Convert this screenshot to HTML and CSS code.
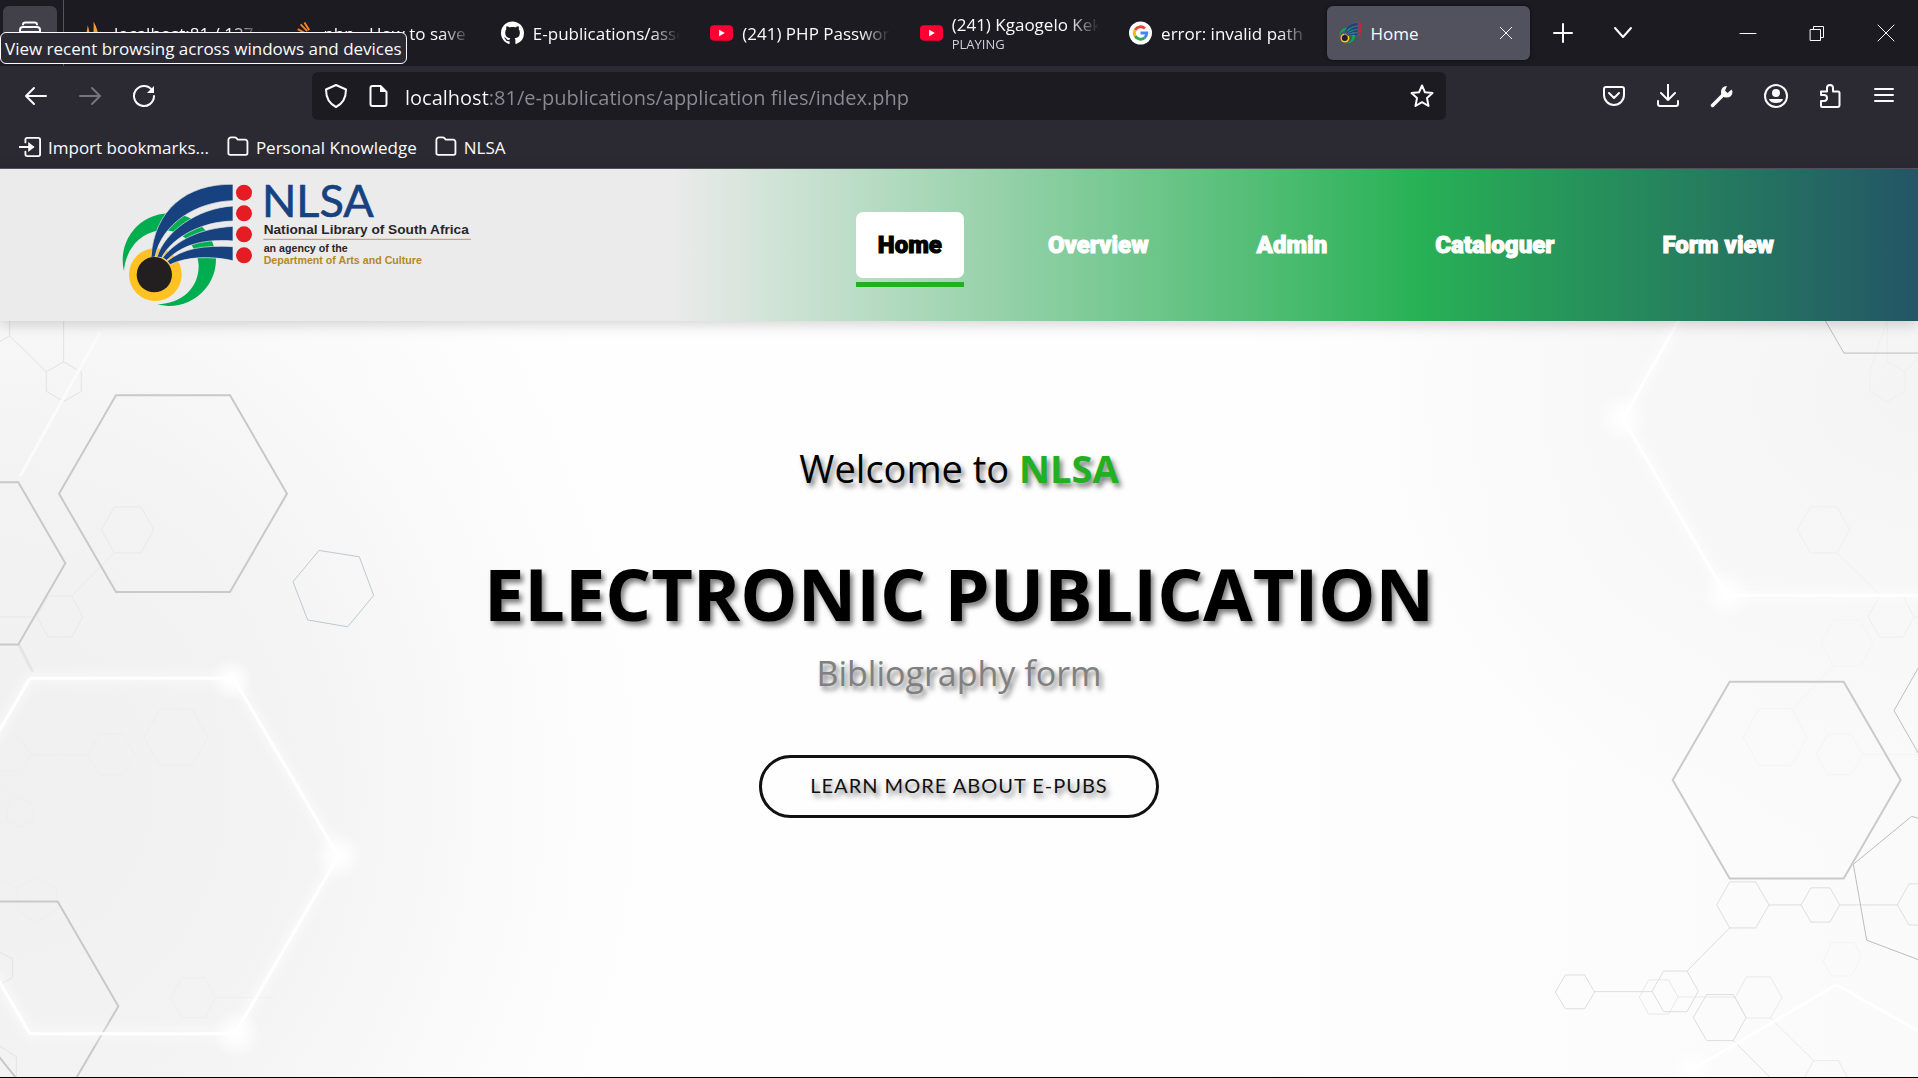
FILE: index.html
```html
<!DOCTYPE html>
<html lang="en">
<head>
<meta charset="utf-8">
<title>Home</title>
<link rel="stylesheet" href="styles.css">
</head>
<body>
<svg class="defs" width="0" height="0" aria-hidden="true">
  <symbol id="mark" viewBox="60 60 410 390">
    <path fill="#00ae50" d="M72 333A140 140 0 1 1 348 298A140 140 0 0 1 172 433C250 430 297 380 296 315C290 250 240 205 180 211C110 220 75 280 72 333Z"/>
    <circle cx="166" cy="344" r="79" fill="#ffc222"/>
    <g fill="#17427f" stroke="#ebebeb" stroke-width="2">
      <path d="M399 73C260 70 162 150 153 293L165 291C185 190 290 125 399 122Z"/>
      <path d="M399 138C290 145 195 215 171 291L185 293C215 235 300 185 399 183Z"/>
      <path d="M399 199C300 205 230 240 188 293L200 301C250 250 320 237 399 243Z"/>
      <path d="M399 260C310 255 250 265 202 303L210 314C260 290 330 287 399 302Z"/>
    </g>
    <circle cx="163" cy="344" r="53" fill="#231f20"/>
    <g fill="#e61c24"><circle cx="432" cy="98" r="24"/><circle cx="432" cy="160" r="24"/><circle cx="432" cy="223" r="24"/><circle cx="432" cy="286" r="24"/></g>
  </symbol>
  <symbol id="youtube" viewBox="0 0 24 24"><rect y="4" width="24" height="16" rx="4" fill="#ff0033"/><path d="M9.500 8.500v7l6-3.500z" fill="#fff"/></symbol>
  <symbol id="folder" viewBox="0 0 24 24"><path d="M1.500 18.500v-14a3 3 0 0 1 3-3h4a2 2 0 0 1 1.500.6l1.800 1.900h8a2.500 2.500 0 0 1 2.500 2.500v12a2 2 0 0 1-2 2h-16.800a2 2 0 0 1-2-2z"/></symbol>
</svg>

<div class="browser">
  <div class="tabbar">
    <button class="recent" aria-label="View recent browsing"><svg class="i24" viewBox="0 0 24 24"><path d="M5 3.500q0-2 2.500-2h9q2.500 0 2.500 2M2 9q0-3 3-3h14q3 0 3 3v10q0 3-3 3h-14q-3 0-3-3zM2 11h20"/></svg></button>
    <div class="tabs">
      <a class="tab" href="#"><svg class="fav" viewBox="0 0 24 24"><path d="M10 22Q13 10 12 0Q17 8 18 22zM1 22Q5 14 6 4Q8 10 9 22zM19 20q1-6 0-10q3 5 4 10z" fill="#f89c2c"/></svg><span class="label">localhost:81 / 127.0.0.1</span></a>
      <a class="tab" href="#"><svg class="fav" viewBox="0 0 24 24"><path d="M14 1l5 8M10 3l7 7M7 8l9 5M6 13l10 2M6 18h10" stroke="#f48024" stroke-width="2" fill="none"/><path d="M3 14v8h16v-8" stroke="#bcbbbb" stroke-width="2" fill="none"/></svg><span class="label">php - How to save a file</span></a>
      <a class="tab" href="#"><svg class="fav" viewBox="0 0 16 16"><path fill="#fff" d="M8 0C3.580 0 0 3.580 0 8c0 3.540 2.290 6.530 5.470 7.590.4.070.55-.17.55-.38 0-.19-.01-.82-.01-1.490-2.010.37-2.530-.49-2.690-.94-.09-.23-.48-.94-.82-1.130-.28-.15-.68-.52-.01-.53.63-.01 1.080.58 1.230.82.72 1.210 1.870.87 2.330.66.070-.52.28-.87.510-1.070-1.780-.2-3.640-.89-3.640-3.950 0-.87.31-1.590.82-2.150-.08-.2-.36-1.020.08-2.120 0 0 .67-.21 2.200.82.64-.18 1.320-.27 2-.27s1.360.09 2 .27c1.530-1.040 2.200-.82 2.200-.82.44 1.100.16 1.920.08 2.120.51.56.82 1.270.82 2.150 0 3.070-1.870 3.750-3.650 3.950.29.25.54.73.54 1.480 0 1.070-.01 1.930-.01 2.200 0 .21.15.46.55.38A8.010 8.010 0 0 0 16 8c0-4.420-3.580-8-8-8z"/></svg><span class="label">E-publications/assets at</span></a>
      <a class="tab" href="#"><svg class="fav"><use href="#youtube"/></svg><span class="label">(241) PHP Password Hash</span></a>
      <a class="tab" href="#"><svg class="fav"><use href="#youtube"/></svg><span class="label two">(241) Kgaogelo Kekana<small>PLAYING</small></span></a>
      <a class="tab" href="#"><svg class="fav" viewBox="0 0 24 24"><circle cx="12" cy="12" r="12" fill="#fff"/><g fill="none" stroke-width="3"><path stroke="#ea4335" d="M6.400 8.800A6.500 6.500 0 0 1 16.600 7.400"/><path stroke="#fbbc05" d="M6.400 15.200A6.500 6.500 0 0 1 6.400 8.800"/><path stroke="#34a853" d="M16.200 17A6.500 6.500 0 0 1 6.400 15.200"/><path stroke="#4285f4" d="M12 12h6.500A6.500 6.500 0 0 1 16.200 17"/></g></svg><span class="label">error: invalid path 'src</span></a>
      <a class="tab active" href="#"><svg class="fav"><use href="#mark"/></svg><span class="label">Home</span><svg class="x" viewBox="0 0 14 14"><path d="M1 1l12 12M13 1L1 13"/></svg></a>
    </div>
    <button class="add" aria-label="New tab"><svg class="i24" viewBox="0 0 24 24"><path d="M12 3v18M3 12h18"/></svg></button>
    <button class="add" aria-label="List all tabs"><svg class="i24" viewBox="0 0 24 24"><path d="M4 7l8 9 8-9"/></svg></button>
    <div class="window">
      <button aria-label="Minimize"><svg class="i24 thin" viewBox="0 0 24 24"><path d="M4 12.500h16"/></svg></button>
      <button aria-label="Restore"><svg class="i24 thin" viewBox="0 0 24 24"><path d="M5.500 8.500h10v11h-10zM8.500 8v-2.500h10v11h-2.500"/></svg></button>
      <button aria-label="Close"><svg class="i24 thin" viewBox="0 0 24 24"><path d="M4 4l16 16M20 4L4 20"/></svg></button>
    </div>
    <div class="tooltip" role="tooltip">View recent browsing across windows and devices</div>
  </div>

  <div class="toolbar">
    <button aria-label="Back"><svg class="i24" viewBox="0 0 24 24"><path d="M22 12H2M10 4l-8 8 8 8"/></svg></button>
    <button aria-label="Forward" disabled><svg class="i24" viewBox="0 0 24 24"><path d="M2 12h20M14 4l8 8-8 8"/></svg></button>
    <button aria-label="Reload"><svg class="i24" viewBox="0 0 24 24"><path d="M20 6A10 10 0 1 0 22 12"/><path class="solid" d="M22 2v7h-7z"/></svg></button>
    <label class="url">
      <svg class="i24" viewBox="0 0 24 24"><path d="M12 1l10 4.500c0 9-3 14-10 17.500C5 19.500 2 14.500 2 5.500z"/></svg>
      <svg class="i24" viewBox="0 0 24 24"><path d="M6.500 2h8l6 6v12a2 2 0 0 1-2 2h-12a2 2 0 0 1-2-2v-16a2 2 0 0 1 2-2z"/><path class="solid" d="M14 2v6h6z"/></svg>
      <input type="text" aria-label="Address" value="localhost:81/e-publications/application files/index.php">
      <svg class="i24" viewBox="0 0 24 24"><path d="M12 1.500l3 6.800 7.500.8-5.500 5 1.500 7.900-6.500-3.800-6.500 3.800 1.500-7.900-5.500-5 7.500-.8z"/></svg>
    </label>
    <button aria-label="Pocket"><svg class="i24" viewBox="0 0 24 24"><path d="M4 3h16a2 2 0 0 1 2 2v6a10 10 0 0 1-20 0v-6a2 2 0 0 1 2-2zM7 9l5 5 5-5"/></svg></button>
    <button aria-label="Downloads"><svg class="i24" viewBox="0 0 24 24"><path d="M12 0v16M5 9l7 7 7-7M2 17v3q0 2 2 2h16q2 0 2-2v-3"/></svg></button>
    <button aria-label="Developer tools"><svg class="i24" viewBox="0 0 24 24"><path d="M2.500 21.500L14 10" stroke-width="3.500"/><path class="solid" d="M17 2q-6 0-6 6.500 0 5 5.500 5 6 0 6-6l-1-2-4 3.500-2.500-2.500z"/></svg></button>
    <button aria-label="Account"><svg class="i24" viewBox="0 0 24 24"><circle cx="12" cy="12" r="11"/><circle class="solid" cx="12" cy="9" r="4"/><path class="solid" d="M5 15h14q-1 4-7 4t-7-4z"/></svg></button>
    <button aria-label="Extensions"><svg class="i24" viewBox="0 0 24 24"><path d="M3 7.500h6v-3.500a3 3 0 0 1 6 0v3.500h5a1.500 1.500 0 0 1 1.500 1.500v12a2 2 0 0 1-2 2h-15.500a1 1 0 0 1-1-1v-5h3a3 3 0 0 0 0-6h-3v-2.500a1 1 0 0 1 1-1z"/></svg></button>
    <button aria-label="Menu"><svg class="i24" viewBox="0 0 24 24"><path d="M3 5h18M3 11h18M3 17h18"/></svg></button>
  </div>

  <nav class="bookmarks" aria-label="Bookmarks">
    <a href="#"><svg class="i22" viewBox="0 0 24 24"><path d="M7 7v-3q0-2 2-2h12q2 0 2 2v16q0 2-2 2h-12q-2 0-2-2v-3M0 12h15"/><path class="solid" d="M10 6.500l7 5.500-7 5.500z"/></svg><span>Import bookmarks...</span></a>
    <a href="#"><svg class="i22"><use href="#folder"/></svg><span>Personal Knowledge</span></a>
    <a href="#"><svg class="i22"><use href="#folder"/></svg><span>NLSA</span></a>
  </nav>
</div>

<header class="site">
  <a class="logo" href="#" aria-label="NLSA">
    <svg viewBox="60 27 1080 456">
      <use href="#mark" x="60" y="60" width="410" height="390"/>
      <text class="big" x="486" y="171">NLSA</text>
      <text class="name" x="491" y="221">National Library of South Africa</text>
      <path d="M490 238h623" stroke="#bf9a56" stroke-width="3"/>
      <text class="dept" x="491" y="276">an agency of the</text>
      <text class="dept gold" x="491" y="311">Department of Arts and Culture</text>
    </svg>
  </a>
  <nav class="menu" aria-label="Main">
    <a class="current" href="#">Home</a>
    <a href="#">Overview</a>
    <a href="#">Admin</a>
    <a href="#">Cataloguer</a>
    <a href="#">Form view</a>
  </nav>
</header>

<main class="hero">
  <svg class="pattern" viewBox="0 33 5754 2271" preserveAspectRatio="xMidYMin slice" aria-hidden="true">
    <defs>
      <radialGradient id="glow"><stop offset="0" stop-color="#fff"/><stop offset=".3" stop-color="#fff" stop-opacity=".8"/><stop offset="1" stop-color="#fff" stop-opacity="0"/></radialGradient>
      <filter id="soft" x="-20%" y="-20%" width="140%" height="140%"><feGaussianBlur stdDeviation="12"/></filter>
    </defs>
    <g transform="scale(1 1.469)" fill="none">
      <g class="fine" stroke="#e2e2e2">
        <path d="M29 0v53L-10 68M29 53L139 126M191 0v106M191 106l53 21v39l-53 21-52-21v-40z"/>
        <path d="M-20 1305l58 20v38l-58 22M-20 1495l69 30v60"/>
      </g>
      <path class="beam" d="M60 340L300 45" stroke="#fbfbfb"/>
      <g class="fine" stroke="#e9e9e9">
        <path d="M343 402h80l38 47-38 47h-80l-39-47zM343 496L215 584M145 584h70l33 43-33 41h-70l-35-41zM-10 627h110"/>
      </g>
      <g class="fine" stroke="#eeeeee">
        <path d="M480 815h97l47 58-47 57h-97l-49-57zM298 866h72l35 42-35 41h-72l-35-41zM95 908h168M30 874h30l34 34-34 34h-60M25 1007l35-12 38 16v30l-40 16-37-16zM-10 1158l60 22 60-22 60 24v42l-62 27-60-27v-44M545 1364h70l32 40-32 41h-70l-32-41zM647 1404h175"/>
      </g>
      <path class="beam" d="M56 683l42 56" stroke="#e4e4e4"/>
      <g class="bold" stroke="#c9c9c9">
        <path d="M348 174h342l171 201-171 201h-342l-171-201z"/>
        <path d="M-20 352h75l141 165-141 166h-75M-20 1208h193l182 214-125 145-40 45M-20 1510l70 60"/>
      </g>
      <path class="fine" d="M957 491l121 13 43 79-78 64-120-14-44-78z" stroke="#bccacd"/>
      <path class="halo" d="M90 752h610l315 363-310 363h-615l-130-150M90 752L-20 880"/>
      <path class="beam" d="M90 752h610l315 363-310 363h-615l-130-150M90 752L-20 880" stroke="#fff"/>
      <g fill="url(#glow)"><ellipse cx="695" cy="755" rx="65" ry="44"/><ellipse cx="1015" cy="1115" rx="75" ry="51"/><ellipse cx="710" cy="1478" rx="75" ry="51"/></g>
    </g>
    <g transform="translate(4314 0) scale(1 1.469)" fill="none">
      <g class="fine" stroke="#efefef">
        <path d="M1348 20v86l53 20v40l-53 21-52-21v-40zM1401 126l50-36M1117 402h80l38 47-38 47h-80l-39-47zM1197 496l125 84 M1325 584h70l33 43-33 41h-70l-35-41zM1428 627h30"/>
        <path d="M1187 633h80l38 48-38 46h-80l-39-46zM1187 727L1062 814M962 814h100l45 58-45 58h-100l-46-58zM1170 866h70l35 42-35 41h-70l-35-41zM1275 908h180M1180 1292h70l20 30-30 38h-60l-24-30z" stroke="#f4f4f4"/>
        <path d="M632 1368h60l28 35-28 35h-60l-28-35zM720 1403h172M925 1362h72l35 42-35 42h-72l-33-42zM997 1446l130 87h75l32 42M1127 1533l-32 40" stroke="#e9e9e9"/>
      </g>
      <g class="fine" stroke="#dedede">
        <path d="M875 1168h78l40 47-40 47h-78l-39-47zM993 1215h96M1119 1180h57l29 35-29 35h-57l-30-35zM1205 1215h173M1450 1172h-37l-35 43 35 41h37M875 1262L747 1350M677 1350h70l34 41-34 42h-70l-35-42zM642 1392H470M382 1358h58l30 35-30 34h-58l-30-34zM806 1398h80l38 47-38 47h-80l-40-47zM886 1492l110 75"/>
      </g>
      <path class="bold" d="M875 759h342l171 201-171 201h-342l-171-201z" stroke="#cacaca"/>
      <path class="fine" d="M1150 8l68 80h230M1450 720l-82 98 82 98M1450 1040l-29-6-175 98 40 155 164 42" stroke="#bdbdbd"/>
      <path class="halo" d="M740 0L555 222l310 361h600"/>
      <path class="beam" d="M740 0L555 222l310 361h600M765 1550l430-172 260 100" stroke="#fff"/>
      <g fill="url(#glow)"><ellipse cx="552" cy="220" rx="75" ry="51"/><ellipse cx="865" cy="580" rx="75" ry="51"/><ellipse cx="765" cy="1550" rx="65" ry="44"/></g>
    </g>
  </svg>
  <p class="welcome">Welcome to <strong>NLSA</strong></p>
  <h1>ELECTRONIC PUBLICATION</h1>
  <p class="sub">Bibliography form</p>
  <button class="more">LEARN MORE ABOUT E-PUBS</button>
</main>
</body>
</html>
```
FILE: styles.css
```css
* { box-sizing: border-box; }

body {
  margin: 0;
  min-height: 100vh;
  display: flex;
  flex-direction: column;
  font-family: "Open Sans", "Noto Sans", sans-serif;
  border-bottom: 1px solid #000;
}

a { color: inherit; text-decoration: none; }
button { border: 0; padding: 0; background: none; color: inherit; font: inherit; }
.defs { position: absolute; }

/* Browser window */
.browser { background: #2b2a33; color: #fbfbfe; font-size: 17px; border-bottom: 1px solid #56555e; }
.browser svg { flex: none; }
.i24, .i22 { width: 24px; height: 24px; fill: none; stroke: currentColor; stroke-width: 2; stroke-linejoin: round; stroke-linecap: round; }
.i22 { width: 22px; height: 22px; }
.thin { stroke-width: 1; stroke-linejoin: miter; }
.solid { fill: currentColor; stroke: none; }

.tabbar { position: relative; display: flex; align-items: center; height: 66px; background: #1c1b22; }
.recent { width: 54px; height: 54px; margin: 0 6px 0 3px; border-radius: 6px; background: #42414a; display: grid; place-items: center; }
.tabs { flex: 1; min-width: 0; display: flex; height: 66px; padding-left: 3px; border-left: 1px solid #56555e; }
.tab { flex: 1; min-width: 0; display: flex; align-items: center; gap: 9px; margin: 6px 3px; padding: 0 12px; border-radius: 6px; }
.tab.active { background: #52525e; box-shadow: 0 0 4px rgba(0, 0, 0, .5); }
.fav { width: 23px; height: 24px; }
.label { flex: 1; min-width: 0; padding-top: 2px; overflow: hidden; white-space: nowrap; line-height: 24px; -webkit-mask-image: linear-gradient(90deg, #000 80%, transparent); mask-image: linear-gradient(90deg, #000 80%, transparent); }
.active .label { -webkit-mask-image: none; mask-image: none; }
.label.two { padding-top: 0; line-height: 22px; }
.two small { display: block; font-size: 13px; line-height: 16px; color: #cfcfd8; }
.x { width: 14px; height: 14px; margin-right: 5px; stroke: currentColor; stroke-width: 1; }
.add { width: 60px; height: 60px; display: grid; place-items: center; }
.window { display: flex; margin-left: 58px; }
.window button { width: 69px; height: 66px; padding-left: 4px; display: grid; place-items: center; }
.tooltip { position: absolute; left: 0; top: 32px; z-index: 2; height: 32px; padding: 0 4px; line-height: 32px; white-space: nowrap; background: #2b2a33; border: 1px solid #fbfbfe; border-radius: 6px; }

.toolbar { display: flex; align-items: center; height: 60px; padding: 0 7px 0 9px; }
.toolbar button { width: 54px; height: 54px; flex: none; display: grid; place-items: center; }
.toolbar button:disabled { color: #76757e; }
.url { flex: 1; min-width: 0; height: 48px; margin: 0 141px; padding: 0 12px; display: flex; align-items: center; gap: 18px; background: #1c1b22; border-radius: 6px; }
.url input {
  flex: 1;
  min-width: 0;
  height: 48px;
  padding: 2px 0 0;
  margin-left: -3px;
  border: 0;
  outline: 0;
  font: 20px/28px "Open Sans", "Noto Sans", sans-serif;
  color: transparent;
  background: linear-gradient(90deg, #fbfbfe 85px, #8c8b93 85px);
  -webkit-background-clip: text;
  background-clip: text;
}

.bookmarks { display: flex; align-items: center; gap: 18px; height: 42px; padding-left: 19px; }
.bookmarks a { display: flex; align-items: center; gap: 7px; line-height: 24px; }
.bookmarks span { padding-top: 2px; }

/* Site header */
.site {
  position: relative;
  z-index: 1;
  display: flex;
  align-items: center;
  justify-content: space-between;
  height: 152px;
  padding: 0 120px;
  background: linear-gradient(90deg, #ebebeb 35%, #28b155 74%, #235566);
  box-shadow: 0 3px 14px rgba(0, 0, 0, .18);
}
.logo svg { display: block; width: 360px; height: 152px; }
.logo .big { font: 135px Lato, sans-serif; fill: #17427f; stroke: #17427f; stroke-width: 2; }
.logo .name { font: bold 41px "Liberation Sans", Arial, sans-serif; fill: #2a2627; }
.logo .dept { font: bold 32px "Liberation Sans", Arial, sans-serif; fill: #2a2627; }
.logo .gold { fill: #b8861f; }

.menu { display: flex; gap: 60px; font: 900 24px/66px Roboto, sans-serif; color: #fff; -webkit-text-stroke: 1px currentColor; }
.menu a { position: relative; padding: 0 24px; border-radius: 7px; }
.menu .current { padding: 0 22px; background: #fff; color: #000; }
.menu .current::after { content: ""; position: absolute; left: 0; right: 0; bottom: -9px; height: 5px; background: #22b022; }

/* Hero */
.hero {
  position: relative;
  isolation: isolate;
  flex: 1;
  display: flex;
  flex-direction: column;
  align-items: center;
  padding: 119px 24px 48px;
  text-align: center;
  background:
    radial-gradient(ellipse 34% 95% at 0 62%, #f0f0f0 0, #f3f3f3 45%, rgba(250, 250, 250, .8) 80%, rgba(255, 255, 255, 0) 100%),
    radial-gradient(ellipse 30% 60% at 100% 10%, #f4f4f4 0, #f8f8f8 55%, rgba(252, 252, 252, 0) 100%),
    linear-gradient(90deg, #fafafa 0, #fefefe 30%, #fefefe 65%, #fafafa 100%);
}
.pattern { position: absolute; inset: 0; z-index: -1; width: 100%; height: 100%; }
.pattern path { vector-effect: non-scaling-stroke; stroke-width: inherit; }
.pattern .fine { stroke-width: 1px; }
.pattern .bold { stroke-width: 2px; }
.pattern .beam { stroke-width: 3px; }
.pattern .halo { stroke: #fff; stroke-width: 8px; opacity: .6; filter: url(#soft); }
.hero p, .hero h1 { margin: 0; text-shadow: 3px 4px 5px rgba(0, 0, 0, .5); }
.hero .welcome { font-size: 38px; line-height: 56px; color: #000; }
.welcome strong { color: #22b022; }
.hero h1 { margin-top: 48px; font-size: 72px; line-height: 98px; color: #000; }
.hero .sub { margin-top: 7px; font-size: 34px; line-height: 48px; color: #808080; }
.more {
  height: 63px;
  margin-top: 58px;
  padding: 0 48px 4px;
  border: 3px solid #111;
  border-radius: 32px;
  font: 20px/28px Lato, sans-serif;
  letter-spacing: 1px;
  color: #111;
  text-shadow: 3px 4px 5px rgba(0, 0, 0, .5);
}
```
